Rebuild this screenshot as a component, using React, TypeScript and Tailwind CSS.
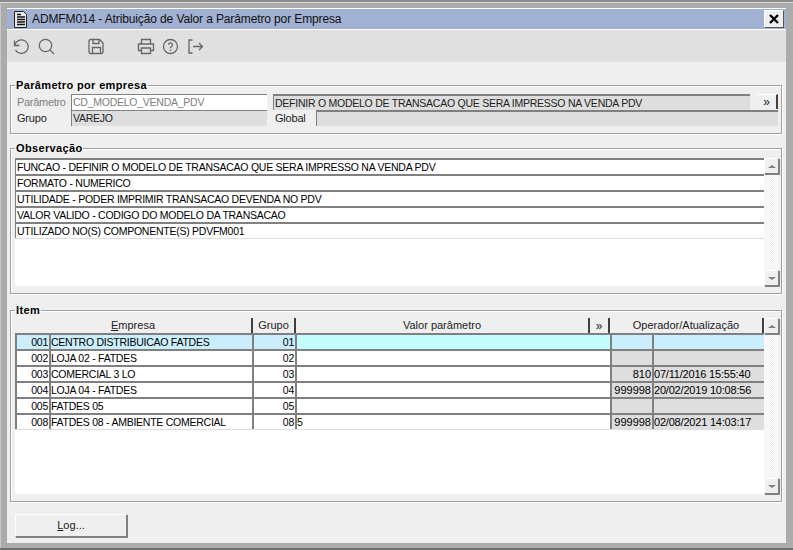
const font = "font-['Liberation_Sans',sans-serif]";

const obs = [
  "FUNCAO - DEFINIR O MODELO DE TRANSACAO QUE SERA IMPRESSO NA VENDA PDV",
  "FORMATO - NUMERICO",
  "UTILIDADE - PODER IMPRIMIR TRANSACAO DEVENDA NO PDV",
  "VALOR VALIDO - CODIGO DO MODELO DA TRANSACAO",
  "UTILIZADO NO(S) COMPONENTE(S) PDVFM001",
];

const rows = [
  { id: "001", nome: "CENTRO DISTRIBUICAO FATDES", grupo: "01", valor: "", op: "", data: "" },
  { id: "002", nome: "LOJA 02 - FATDES", grupo: "02", valor: "", op: "", data: "" },
  { id: "003", nome: "COMERCIAL 3 LO", grupo: "03", valor: "", op: "810", data: "07/11/2016 15:55:40" },
  { id: "004", nome: "LOJA 04 - FATDES", grupo: "04", valor: "", op: "999998", data: "20/02/2019 10:08:56" },
  { id: "005", nome: "FATDES 05", grupo: "05", valor: "", op: "", data: "" },
  { id: "008", nome: "FATDES 08 - AMBIENTE COMERCIAL", grupo: "08", valor: "5", op: "999998", data: "02/08/2021 14:03:17" },
];

const caps = "text-[10.5px] tracking-[-0.25px]";

function ScrollBar() {
  return (
    <div className="flex h-full w-[15px] shrink-0 flex-col justify-between bg-[repeating-conic-gradient(#efefef_0_25%,#ffffff_0_50%)] bg-[length:2px_2px]">
      <div className="flex h-[16px] items-center justify-center border border-t-white border-l-white border-r-[#808080] border-b-[#808080] bg-[#efefef] shadow-[1px_1px_0_#808080]">
        <div className="h-0 w-0 border-x-[4px] border-b-[3px] border-x-transparent border-b-[#808080]" />
      </div>
      <div className="flex h-[16px] items-center justify-center border border-t-white border-l-white border-r-[#808080] border-b-[#808080] bg-[#efefef] shadow-[1px_1px_0_#808080]">
        <div className="h-0 w-0 border-x-[4px] border-t-[3px] border-x-transparent border-t-[#808080]" />
      </div>
    </div>
  );
}

function Group({ title, className, children }: { title: string; className: string; children: React.ReactNode }) {
  return (
    <fieldset className={`border border-[#a0a0a0] shadow-[1px_1px_0_#fff,inset_1px_1px_0_#fff] ${className}`}>
      <legend className="ml-[4px] px-[1px] text-[11px] leading-[11px] font-bold tracking-[0.35px] text-black">{title}</legend>
      {children}
    </fieldset>
  );
}

function HeaderCell({ className, children }: { className: string; children: React.ReactNode }) {
  return (
    <div className={`flex h-[15px] shrink-0 items-center justify-center border-r-2 border-r-[#404040] bg-[#efefef] text-[11px] text-[#222] ${className}`}>
      {children}
    </div>
  );
}

const cell = "h-[16px] shrink-0 overflow-hidden whitespace-nowrap border-t-2 border-l-2 border-[#808080] leading-[14px] text-black";

export default function App() {
  return (
    <div className={`${font} h-[550px] w-[793px] overflow-hidden border-t-2 border-b-2 border-t-[#8c8c8c] border-b-[#6e6e6e] bg-[#ababab]`}>
      <div className="h-[546px] border-t border-l border-t-[#dcdcdc] border-l-[#c8c8c8] pt-[5px] pl-[6px] pr-[7px]">
        <div className="flex h-[535px] flex-col bg-[#efefef]">
          <div className="flex h-[22px] shrink-0 items-center border-y border-y-white bg-[#a0b1d1] pl-[6px]">
            <svg width="15" height="17" viewBox="0 0 15 17" className="shrink-0">
              <path d="M1.500 .5h9l3 3v13h-12z" fill="#e8e8e8" stroke="#222" />
              <path d="M4 3.500h4M4 6h8M4 8.500h8M4 11h8M4 13.500h8" stroke="#111" strokeWidth="1.600" />
            </svg>
            <span className="ml-[4px] text-[12px] tracking-[-0.12px] text-[#111]">ADMFM014 - Atribuição de Valor a Parâmetro por Empresa</span>
            <div className="mr-[2px] ml-auto flex h-[18px] w-[20px] items-center justify-center border border-t-white border-l-white border-r-[#555] border-b-[#555] bg-[#efefef]">
              <svg width="10" height="10" viewBox="0 0 10 10">
                <path d="M1 1l8 8M9 1l-8 8" stroke="#000" strokeWidth="2.400" />
              </svg>
            </div>
          </div>

          <div className="flex h-[32px] shrink-0 items-center bg-[#e0e0e0] pl-[5px]">
            <svg width="17" height="17" viewBox="0 0 17 17" fill="none" stroke="#666" strokeWidth="1.300">
              <path d="M2.500 2.500v5h5" />
              <path d="M2.700 7.500A6.800 6.800 0 1 1 3.500 12" />
            </svg>
            <svg width="17" height="17" viewBox="0 0 17 17" fill="none" stroke="#666" strokeWidth="1.300" className="ml-[9px]">
              <circle cx="7.500" cy="7.500" r="6.200" />
              <path d="M12 12l4 4" />
            </svg>
            <svg width="17" height="17" viewBox="0 0 17 17" fill="none" stroke="#666" strokeWidth="1.300" className="ml-[33px]">
              <path d="M2.500 1.500h9l3.500 3.500v9a1.500 1.500 0 0 1-1.500 1.500h-11a1.500 1.500 0 0 1-1.500-1.500v-11a1.500 1.500 0 0 1 1.500-1.500z" />
              <path d="M5 1.500v4h6v-4M4.500 15.500v-6h8v6" />
            </svg>
            <svg width="18" height="17" viewBox="0 0 18 17" fill="none" stroke="#666" strokeWidth="1.300" className="ml-[32px]">
              <path d="M4.500 6V1.500h9V6M4.500 12.500H1.500V6h15v6.500h-3" />
              <path d="M4.500 10h9v5.500h-9z" />
            </svg>
            <svg width="17" height="17" viewBox="0 0 17 17" fill="none" stroke="#666" strokeWidth="1.300" className="ml-[7px]">
              <circle cx="8.500" cy="8.500" r="7" />
              <path d="M6.500 6.800c0-2.600 4-2.600 4 0 0 1.700-2 1.600-2 3.400M8.500 11.500v1.500" />
            </svg>
            <svg width="17" height="17" viewBox="0 0 17 17" fill="none" stroke="#666" strokeWidth="1.300" className="ml-[8px]">
              <path d="M5.500 2h-3.500v13h3.500" />
              <path d="M6 8.500h9M12 5l3.500 3.500L12 12" />
            </svg>
          </div>

          <div className="flex flex-1 flex-col pt-[18px] pr-[4px] pl-[3px]">
            <Group title="Parâmetro por empresa" className="h-[54px] shrink-0">
              <div className="mt-[3px] flex h-[16px] pl-[4px]">
                <span className="w-[56px] shrink-0 pl-[2px] text-[11px] leading-[16px] tracking-[-0.3px] text-[#808080]">Parâmetro</span>
                <div className={`${caps} h-[16px] w-[196px] shrink-0 border-t border-l border-[#808080] bg-white pl-[1px] leading-[15px] text-[#808080]`}>CD_MODELO_VENDA_PDV</div>
                <div className={`${caps} ml-[6px] h-[16px] w-[477px] shrink-0 border-t-2 border-l border-[#808080] bg-[#dedede] pl-[1px] leading-[14px] text-[#222]`}>DEFINIR O MODELO DE TRANSACAO QUE SERA IMPRESSO NA VENDA PDV</div>
                <div className="ml-[7px] flex h-[15px] w-[21px] shrink-0 items-center justify-center border-t border-r-2 border-t-white border-r-[#404040] bg-[#efefef] text-[12px] leading-[12px] text-[#222]">»</div>
              </div>
              <div className="flex h-[16px] pl-[4px]">
                <span className="w-[56px] shrink-0 pl-[2px] text-[11px] leading-[16px] tracking-[-0.2px] text-[#222]">Grupo</span>
                <div className={`${caps} h-[16px] w-[196px] shrink-0 border-t border-l border-[#808080] bg-[#dedede] pl-[1px] leading-[15px] text-[#222]`}>VAREJO</div>
                <span className="ml-[8px] w-[41px] shrink-0 text-[11px] leading-[16px] tracking-[-0.2px] text-[#222]">Global</span>
                <div className="h-[16px] w-[462px] shrink-0 border-t-2 border-l border-[#808080] bg-[#dedede]" />
              </div>
            </Group>

            <Group title="Observação" className="mt-[9px] h-[151px] shrink-0">
              <div className="mt-[4px] flex h-[128px] pl-[4px]">
                <div className="w-[749px] shrink-0 bg-white">
                  {obs.map((o) => (
                    <div key={o} className={`${caps} h-[16px] border-t-2 border-l border-[#808080] pl-[1px] leading-[14px] text-black`}>{o}</div>
                  ))}
                  <div className="border-t border-[#dedede]" />
                </div>
                <ScrollBar />
              </div>
            </Group>

            <Group title="Item" className="mt-[11px] h-[197px] shrink-0">
              <div className="mt-[2px] flex h-[176px] pl-[4px]">
                <div className="w-[749px] shrink-0 bg-white">
                  <div className="flex">
                    <HeaderCell className="w-[238px]"><span><u>E</u>mpresa</span></HeaderCell>
                    <HeaderCell className="w-[43px]">Grupo</HeaderCell>
                    <HeaderCell className="w-[294px]">Valor parâmetro</HeaderCell>
                    <HeaderCell className="w-[20px] text-[12px]">»</HeaderCell>
                    <HeaderCell className="w-[154px]">Operador/Atualização</HeaderCell>
                  </div>
                  {rows.map((r, i) => {
                    const sel = i === 0;
                    const bg = sel ? "bg-[#cbeefc]" : "bg-white";
                    const gray = sel ? "bg-[#cbeefc]" : "bg-[#dedede]";
                    return (
                      <div key={r.id} className="flex">
                        <div className={`${cell} ${caps} ${bg} w-[34px] pr-[1px] text-right`}>{r.id}</div>
                        <div className={`${cell} ${caps} ${bg} w-[203px]`}>{r.nome}</div>
                        <div className={`${cell} ${caps} ${bg} w-[43px] pr-[1px] text-right`}>{r.grupo}</div>
                        <div className={`${cell} ${caps} ${sel ? "bg-[#c4fcfc]" : "bg-white"} w-[315px]`}>{r.valor}</div>
                        <div className={`${cell} ${gray} w-[42px] pr-[1px] text-right text-[11px]`}>{r.op}</div>
                        <div className={`${cell} ${gray} w-[112px] text-[11px] tracking-[-0.2px]`}>{r.data}</div>
                      </div>
                    );
                  })}
                  <div className="border-t border-[#dedede]" />
                </div>
                <ScrollBar />
              </div>
            </Group>

            <div className="mt-[12px] pl-[5px]">
              <button className="flex h-[23px] w-[112px] items-center justify-center border border-t-white border-l-white border-r-[#808080] border-b-[#808080] bg-[#efefef] text-[11px] text-[#222] shadow-[1px_1px_0_#808080]">
                <span><u>L</u>og...</span>
              </button>
            </div>
          </div>
        </div>
      </div>
    </div>
  );
}
